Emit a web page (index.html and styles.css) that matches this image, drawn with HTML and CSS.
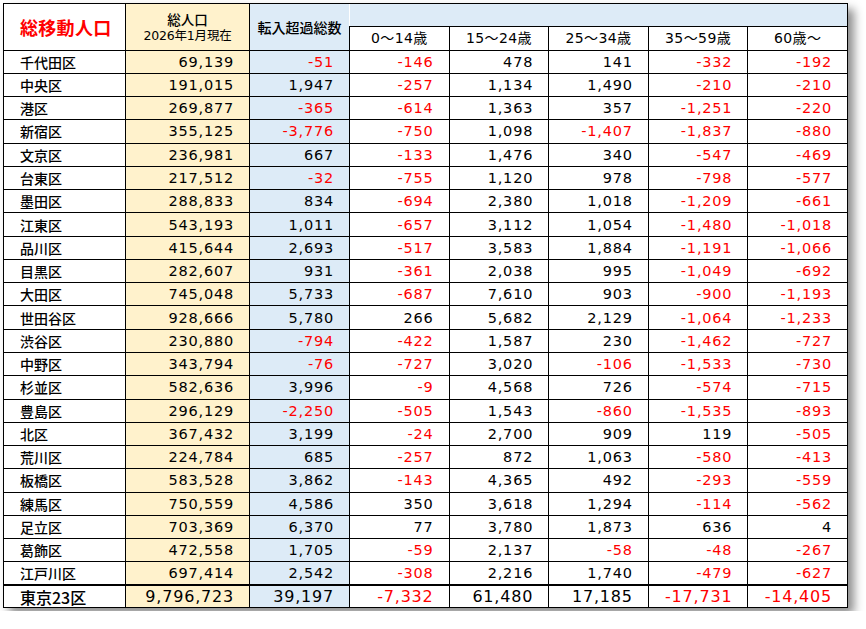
FILE: index.html
```html
<!DOCTYPE html>
<html lang="ja">
<head>
<meta charset="utf-8">
<title>総移動人口</title>
<link rel="stylesheet" href="styles.css">
</head>
<body>
<table class="sheet">
  <colgroup>
    <col class="c-name"><col class="c-pop"><col class="c-net">
    <col class="c-age"><col class="c-age"><col class="c-age"><col class="c-age"><col class="c-age">
  </colgroup>
  <thead>
    <tr class="hr">
      <th rowspan="2" class="title">総移動人口</th>
      <th rowspan="2" class="pop head-pop"><span class="l1">総人口</span><span class="l2">2026年1月現在</span></th>
      <th rowspan="2" class="net head-net">転入超過総数</th>
      <th colspan="5" class="blank"></th>
    </tr>
    <tr class="hr">
      <th class="age">0～14歳</th>
      <th class="age">15～24歳</th>
      <th class="age">25～34歳</th>
      <th class="age">35～59歳</th>
      <th class="age">60歳～</th>
    </tr>
  </thead>
  <tbody>
    <tr><td class="name">千代田区</td><td class="pop">69,139</td><td class="net n">-51</td><td class="n">-146</td><td>478</td><td>141</td><td class="n">-332</td><td class="n">-192</td></tr>
    <tr><td class="name">中央区</td><td class="pop">191,015</td><td class="net">1,947</td><td class="n">-257</td><td>1,134</td><td>1,490</td><td class="n">-210</td><td class="n">-210</td></tr>
    <tr><td class="name">港区</td><td class="pop">269,877</td><td class="net n">-365</td><td class="n">-614</td><td>1,363</td><td>357</td><td class="n">-1,251</td><td class="n">-220</td></tr>
    <tr><td class="name">新宿区</td><td class="pop">355,125</td><td class="net n">-3,776</td><td class="n">-750</td><td>1,098</td><td class="n">-1,407</td><td class="n">-1,837</td><td class="n">-880</td></tr>
    <tr><td class="name">文京区</td><td class="pop">236,981</td><td class="net">667</td><td class="n">-133</td><td>1,476</td><td>340</td><td class="n">-547</td><td class="n">-469</td></tr>
    <tr><td class="name">台東区</td><td class="pop">217,512</td><td class="net n">-32</td><td class="n">-755</td><td>1,120</td><td>978</td><td class="n">-798</td><td class="n">-577</td></tr>
    <tr><td class="name">墨田区</td><td class="pop">288,833</td><td class="net">834</td><td class="n">-694</td><td>2,380</td><td>1,018</td><td class="n">-1,209</td><td class="n">-661</td></tr>
    <tr><td class="name">江東区</td><td class="pop">543,193</td><td class="net">1,011</td><td class="n">-657</td><td>3,112</td><td>1,054</td><td class="n">-1,480</td><td class="n">-1,018</td></tr>
    <tr><td class="name">品川区</td><td class="pop">415,644</td><td class="net">2,693</td><td class="n">-517</td><td>3,583</td><td>1,884</td><td class="n">-1,191</td><td class="n">-1,066</td></tr>
    <tr><td class="name">目黒区</td><td class="pop">282,607</td><td class="net">931</td><td class="n">-361</td><td>2,038</td><td>995</td><td class="n">-1,049</td><td class="n">-692</td></tr>
    <tr><td class="name">大田区</td><td class="pop">745,048</td><td class="net">5,733</td><td class="n">-687</td><td>7,610</td><td>903</td><td class="n">-900</td><td class="n">-1,193</td></tr>
    <tr><td class="name">世田谷区</td><td class="pop">928,666</td><td class="net">5,780</td><td>266</td><td>5,682</td><td>2,129</td><td class="n">-1,064</td><td class="n">-1,233</td></tr>
    <tr><td class="name">渋谷区</td><td class="pop">230,880</td><td class="net n">-794</td><td class="n">-422</td><td>1,587</td><td>230</td><td class="n">-1,462</td><td class="n">-727</td></tr>
    <tr><td class="name">中野区</td><td class="pop">343,794</td><td class="net n">-76</td><td class="n">-727</td><td>3,020</td><td class="n">-106</td><td class="n">-1,533</td><td class="n">-730</td></tr>
    <tr><td class="name">杉並区</td><td class="pop">582,636</td><td class="net">3,996</td><td class="n">-9</td><td>4,568</td><td>726</td><td class="n">-574</td><td class="n">-715</td></tr>
    <tr><td class="name">豊島区</td><td class="pop">296,129</td><td class="net n">-2,250</td><td class="n">-505</td><td>1,543</td><td class="n">-860</td><td class="n">-1,535</td><td class="n">-893</td></tr>
    <tr><td class="name">北区</td><td class="pop">367,432</td><td class="net">3,199</td><td class="n">-24</td><td>2,700</td><td>909</td><td>119</td><td class="n">-505</td></tr>
    <tr><td class="name">荒川区</td><td class="pop">224,784</td><td class="net">685</td><td class="n">-257</td><td>872</td><td>1,063</td><td class="n">-580</td><td class="n">-413</td></tr>
    <tr><td class="name">板橋区</td><td class="pop">583,528</td><td class="net">3,862</td><td class="n">-143</td><td>4,365</td><td>492</td><td class="n">-293</td><td class="n">-559</td></tr>
    <tr><td class="name">練馬区</td><td class="pop">750,559</td><td class="net">4,586</td><td>350</td><td>3,618</td><td>1,294</td><td class="n">-114</td><td class="n">-562</td></tr>
    <tr><td class="name">足立区</td><td class="pop">703,369</td><td class="net">6,370</td><td>77</td><td>3,780</td><td>1,873</td><td>636</td><td>4</td></tr>
    <tr><td class="name">葛飾区</td><td class="pop">472,558</td><td class="net">1,705</td><td class="n">-59</td><td>2,137</td><td class="n">-58</td><td class="n">-48</td><td class="n">-267</td></tr>
    <tr><td class="name">江戸川区</td><td class="pop">697,414</td><td class="net">2,542</td><td class="n">-308</td><td>2,216</td><td>1,740</td><td class="n">-479</td><td class="n">-627</td></tr>
  </tbody>
  <tfoot>
    <tr class="total"><td class="name">東京23区</td><td class="pop">9,796,723</td><td class="net">39,197</td><td class="n">-7,332</td><td>61,480</td><td>17,185</td><td class="n">-17,731</td><td class="n">-14,405</td></tr>
  </tfoot>
</table>
</body>
</html>
```

FILE: styles.css
```css
html, body {
  margin: 0;
  padding: 0;
  background: #ffffff;
}

body {
  padding: 3px;
  font-family: "DejaVu Sans", "Noto Sans CJK JP", sans-serif;
  color: #000000;
}

.sheet {
  border-collapse: collapse;
  table-layout: fixed;
  width: 844px;
  border: 1px solid #000000;
  box-shadow: 6px 6px 9px rgba(0, 0, 0, 0.45);
  background: #ffffff;
}

.c-name { width: 122px; }
.c-pop { width: 124px; }
.c-net { width: 100px; }
.c-age { width: 99.6px; }

.sheet tr {
  height: 23.28px;
}

.sheet th,
.sheet td {
  border: 1px solid #000000;
  padding: 0;
  line-height: 18px;
  white-space: nowrap;
  overflow: hidden;
}

.sheet td {
  text-align: right;
  padding-right: 15px;
  font-size: 14.5px;
  letter-spacing: 0.8px;
  font-family: "DejaVu Sans", "Noto Sans CJK JP", sans-serif;
}

.sheet td.name {
  text-align: left;
  padding-left: 16px;
  padding-right: 0;
  font-size: 14px;
  font-weight: 500;
  letter-spacing: 0;
  font-family: "Noto Sans CJK JP", sans-serif;
}

.pop { background: #fff2cc; }
.net { background: #ddebf7; }

.n { color: #ff0000; }

/* header */
.sheet th {
  font-weight: 500;
  text-align: center;
  vertical-align: middle;
}

.title {
  color: #ff0000;
  font-weight: bold !important;
  font-size: 18px;
  font-family: "Noto Sans CJK JP", sans-serif;
  text-align: left !important;
  padding-left: 16px !important;
  letter-spacing: 0.3px;
}

.head-pop .l1,
.head-pop .l2 {
  display: block;
  font-family: "Noto Sans CJK JP", sans-serif;
}

.head-pop .l1 {
  font-size: 13.5px;
  line-height: 17px;
}

.head-pop .l2 {
  font-size: 12.5px;
  line-height: 15px;
  font-family: "DejaVu Sans", "Noto Sans CJK JP", sans-serif;
  font-weight: normal;
  letter-spacing: -0.2px;
}

.head-net {
  font-family: "Noto Sans CJK JP", sans-serif;
  font-size: 14px;
  border-right: none !important;
}

.blank {
  background: #ddebf7;
  border-left: hidden !important;
}

.age {
  font-size: 14px;
  font-family: "DejaVu Sans", "Noto Sans CJK JP", sans-serif;
  font-weight: normal !important;
  letter-spacing: 0.4px;
}

/* total row */
.total {
  height: 22.8px !important;
}

.total td {
  border-top: 2px solid #000000;
  font-size: 16px;
}

.total td.name {
  font-size: 16px;
}
```
